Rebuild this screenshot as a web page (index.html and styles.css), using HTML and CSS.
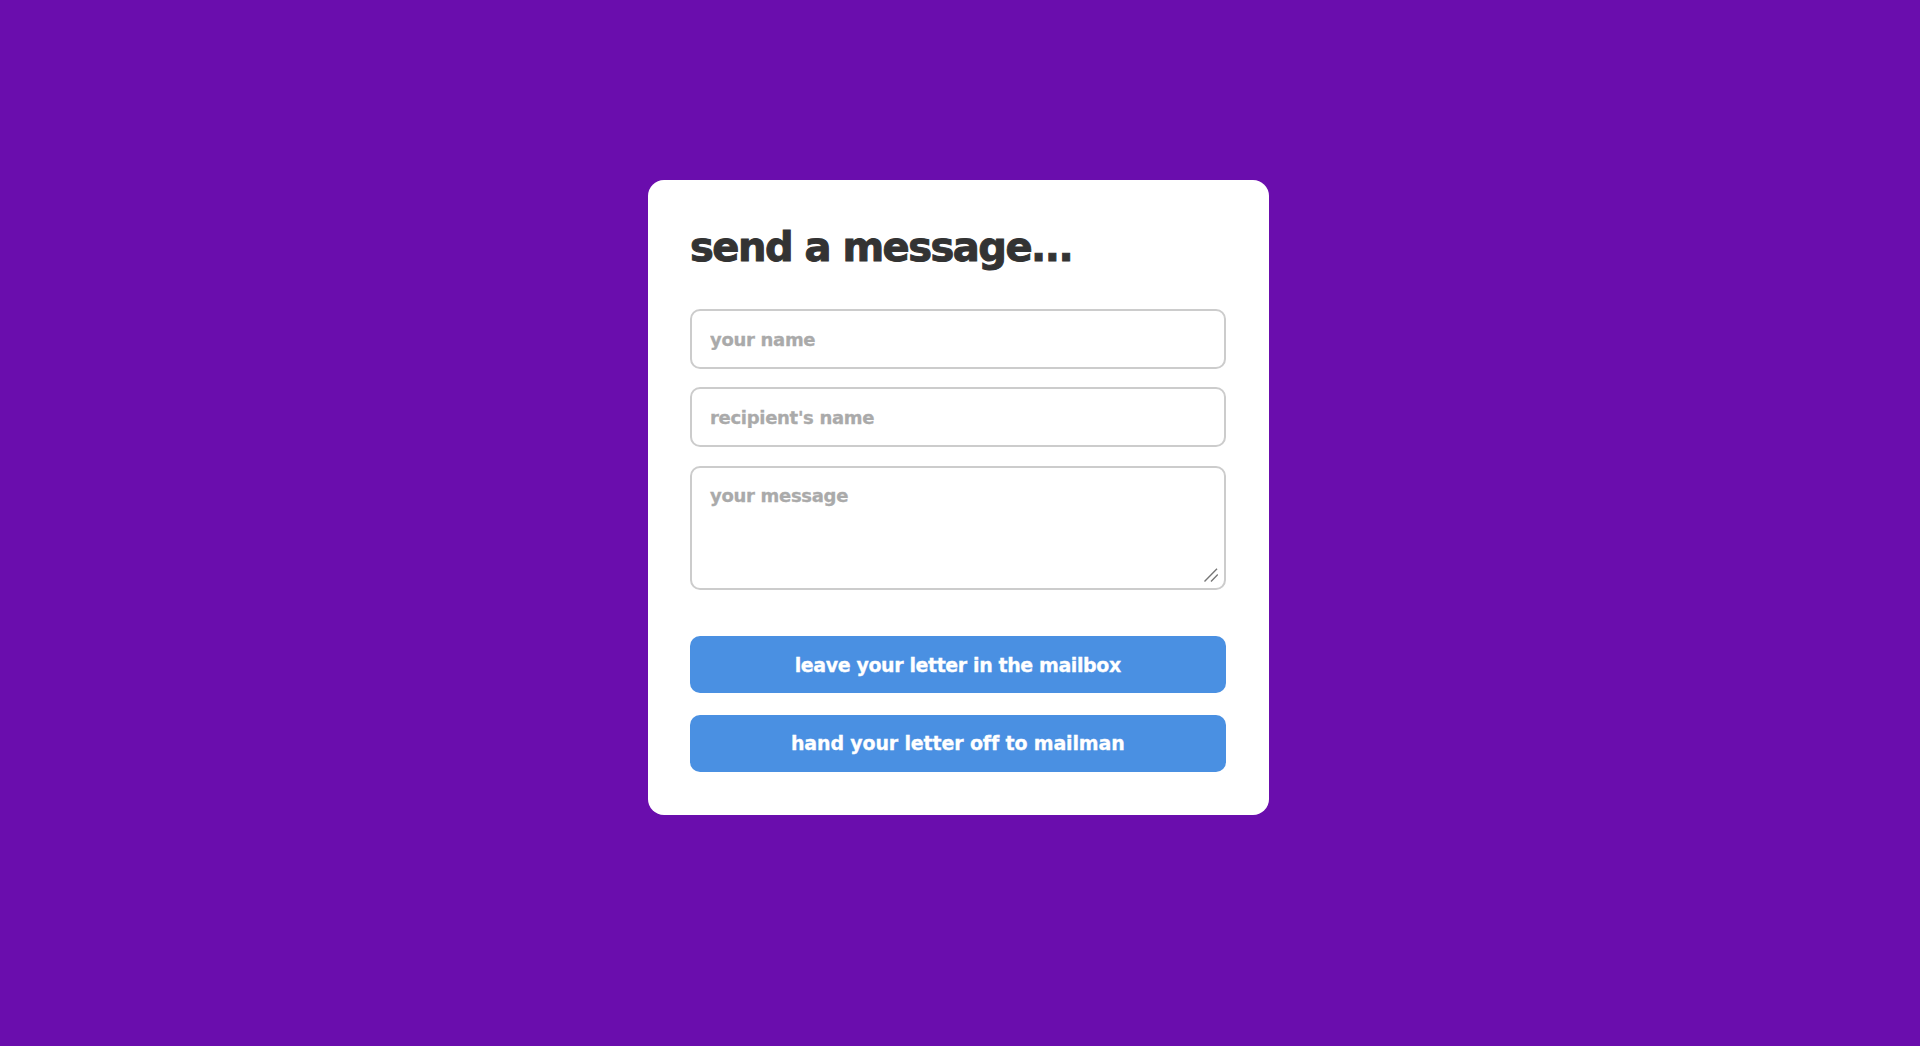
FILE: index.html
```html
<!DOCTYPE html>
<html lang="en">
<head>
    <meta charset="UTF-8">
    <meta name="viewport" content="width=device-width, initial-scale=1.0">
    <title>Send a message</title>
    <link rel="stylesheet" href="styles.css">
</head>
<body>
    <div class="letter-card">
        <h1 class="letter-card__title">send a message...</h1>
        <form class="letter-form">
            <input class="letter-form__field" type="text" placeholder="your name">
            <input class="letter-form__field" type="text" placeholder="recipient's name">
            <div class="letter-form__message-wrap">
                <textarea class="letter-form__field letter-form__message" placeholder="your message"></textarea>
                <svg class="letter-form__grip" width="14" height="14" viewBox="0 0 14 14" aria-hidden="true">
                    <path d="M0.5 13.5 L13 0.8 M7 13.5 L13.8 6.5" />
                </svg>
            </div>
            <button class="letter-form__button letter-form__button--leave" type="button">leave your letter in the mailbox</button>
            <button class="letter-form__button letter-form__button--hand" type="button">hand your letter off to mailman</button>
        </form>
    </div>
</body>
</html>
```

FILE: styles.css
```css
* { box-sizing: border-box; }
html, body { height: 100%; }
body { margin: 0; padding: 180px 4px 0 0; background: #6a0dad; display: flex; justify-content: center; align-items: flex-start; font-family: "DejaVu Sans", sans-serif; }
.letter-card { width: 621px; height: 635px; padding: 43px 43px 43px 42.5px; background: #fff; border-radius: 16px; }
.letter-card__title { margin: 0 0 38px; height: 48px; line-height: 48px; font-size: 40px; font-weight: 700; color: #333; letter-spacing: -1.5px; -webkit-text-stroke: 1px #333; }
.letter-form { display: flex; flex-direction: column; gap: 18.4px; }
.letter-form__field { display: block; width: 100%; height: 60px; padding: 0 18px; border: 2px solid #ccc; border-radius: 10px; background: #fff; font-family: inherit; font-size: 18px; font-weight: 700; letter-spacing: -.3px; color: #333; outline: none; }
.letter-form__field::placeholder { color: #aaa; opacity: 1; -webkit-text-stroke: .3px #aaa; }
.letter-form__message-wrap { position: relative; }
.letter-form__message { height: 124px; padding: 17px 18px; resize: none; }
.letter-form__grip { position: absolute; right: 8px; bottom: 8px; fill: none; stroke: #777; stroke-width: 1.4; }
.letter-form__button { display: block; width: 100%; height: 57px; border: 0; border-radius: 10px; background: #4a90e2; color: #fff; font-family: inherit; font-size: 19px; font-weight: 700; -webkit-text-stroke: .3px #fff; }
.letter-form__button--leave { margin: 28px 0 3px; letter-spacing: -.4px; }
.letter-form__button--hand { letter-spacing: -.15px; }
```
